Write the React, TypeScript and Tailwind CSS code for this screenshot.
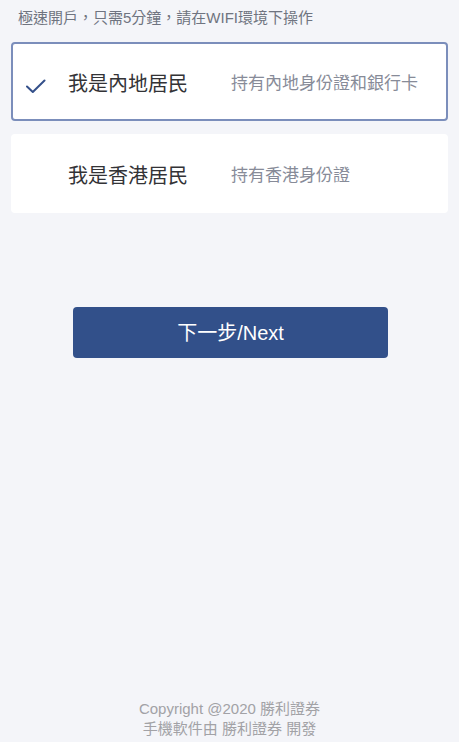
import { useState } from 'react';

const FONT = '"Liberation Sans", "Noto Sans CJK TC", sans-serif';

interface Option {
  id: string;
  title: string;
  desc: string;
}

const options: Option[] = [
  { id: 'mainland', title: '我是內地居民', desc: '持有內地身份證和銀行卡' },
  { id: 'hk', title: '我是香港居民', desc: '持有香港身份證' },
];

const Check = () => (
  <svg width="20" height="16" viewBox="0 0 20 16" fill="none">
    <path d="M1 8.5 L6.8 14 L18.5 2.5" stroke="#34508a" strokeWidth="2" strokeLinecap="round" strokeLinejoin="round" />
  </svg>
);

const App = () => {
  const [selected, setSelected] = useState('mainland');

  return (
    <div className="min-h-screen bg-[#f4f5f9] flex flex-col" style={{ fontFamily: FONT }}>
      <p className="pt-[8px] pl-[18px] text-[15px] leading-[20px] text-[#6f7480]">
        極速開戶，只需5分鐘，請在WIFI環境下操作
      </p>

      <div className="mt-[14px] px-[11px] flex flex-col gap-[13px]">
        {options.map((opt) => {
          const active = selected === opt.id;
          return (
            <div
              key={opt.id}
              onClick={() => setSelected(opt.id)}
              className={`h-[79px] pt-[5px] bg-white rounded-[4px] flex items-center cursor-pointer border-2 ${
                active ? 'border-[#7b8ebb]' : 'border-white'
              }`}
            >
              <div className="w-[55px] pl-[13px] pt-[3px] flex items-center">{active && <Check />}</div>
              <span className="w-[163px] text-[20px] text-[#333336]">{opt.title}</span>
              <span className="text-[17px] text-[#878b98]">{opt.desc}</span>
            </div>
          );
        })}
      </div>

      <div className="mt-[94px] flex">
        <button className="ml-[73px] w-[315px] h-[51px] rounded-[4px] bg-[#32508a] text-white text-[20px]">
          下一步/Next
        </button>
      </div>

      <footer className="mt-auto pb-[3px] text-center text-[15px] leading-[20px] text-[#a2a2a6]">
        <p>Copyright @2020 勝利證券</p>
        <p>手機軟件由 勝利證券 開發</p>
      </footer>
    </div>
  );
};

export default App;
